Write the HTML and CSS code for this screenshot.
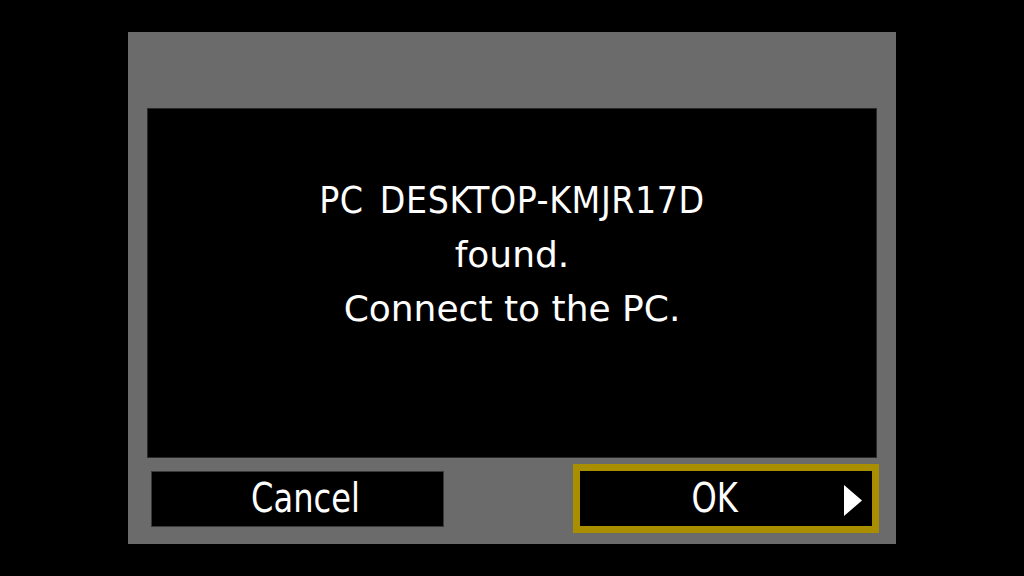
FILE: index.html
```html
<!DOCTYPE html>
<html>
	<head>
		<meta http-equiv="Content-Type" content="text/html; charset=utf-8">
		<title>Connect</title>
		<link rel="stylesheet" href="styles.css">
	</head>
	<body>
		<div id="screen">
			<div id="message">
				<p class="host">PC DESKTOP-KMJR17D</p>
				<p>found.</p>
				<p>Connect to the PC.</p>
			</div>

			<div id="buttons">
				<span class="button cancel"><span class="label">Cancel</span></span>
				<span class="button ok selected">
					<span class="label">OK</span>
					<svg class="arrow" width="18" height="31" viewBox="0 0 18 31"><polygon points="0,0 18,15.5 0,31" fill="#fff"/></svg>
				</span>
			</div>
		</div>
	</body>
</html>
```

FILE: styles.css
```css
* {
	margin: 0;
	padding: 0;
}

html, body {
	width: 100%;
	height: 100%;
}

body {
	background: #000;
	color: #fff;
	font-family: "DejaVu Sans Condensed", "DejaVu Sans", sans-serif;
	font-stretch: condensed;
	display: flex;
	align-items: center;
	justify-content: center;
}

#screen {
	width: 768px;
	height: 512px;
	box-sizing: border-box;
	background: #6b6b6b;
	padding: 76px 19px 0;
}

#message {
	height: 350px;
	box-sizing: border-box;
	background: #000;
	border: 1px solid #2a2a2a;
	display: flex;
	flex-direction: column;
	align-items: center;
	padding-top: 65px;
	font-family: "DejaVu Sans", sans-serif;
	font-stretch: normal;
	font-size: 36px;
	line-height: 54px;
}

/* the host name is drawn narrower and more spread out */
#message .host {
	font-family: "DejaVu Sans Condensed", "DejaVu Sans", sans-serif;
	font-stretch: condensed;
	font-size: 37px;
	letter-spacing: 0.6px;
	word-spacing: 5px;
}

#buttons {
	display: flex;
	align-items: center;
	justify-content: space-between;
	padding-top: 6px;
	margin: 0 -2px 0 4px;
}

.button {
	display: flex;
	align-items: center;
	justify-content: center;
	box-sizing: border-box;
	background: #000;
	border: 1px solid #3a3a3a;
	font-size: 41px;
	line-height: 1;
}

.button .label {
	display: inline-block;
	transform: scaleX(0.87);
}

.cancel {
	width: 293px;
	height: 56px;
	padding-left: 15px;
}

.ok {
	width: 306px;
	height: 69px;
	border: 7px solid #a98e00;
	position: relative;
	padding-right: 22px;
}

.ok .arrow {
	position: absolute;
	right: 10px;
	top: 14px;
}
```
